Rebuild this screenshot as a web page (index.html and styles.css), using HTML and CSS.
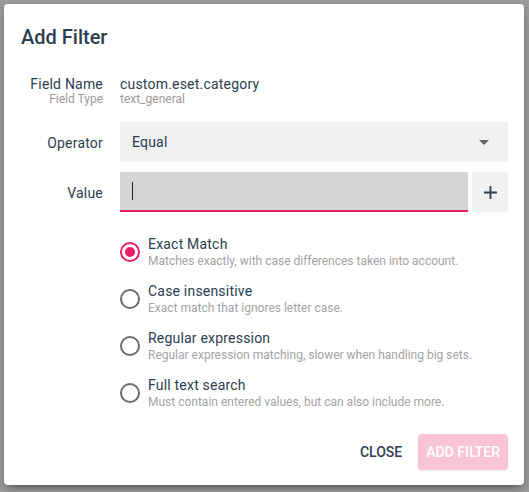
FILE: index.html
```html
<!DOCTYPE html>
<html lang="en">
<head>
<meta charset="utf-8">
<title>Add Filter</title>
<link rel="stylesheet" href="styles.css">
</head>
<body>
<div class="dialog">
  <h2 class="title">Add Filter</h2>

  <div class="row field-row">
    <div class="label">
      <div class="lbl-main">Field Name</div>
      <div class="lbl-sub">Field Type</div>
    </div>
    <div class="content">
      <div class="field-name">custom.eset.category</div>
      <div class="field-type">text_general</div>
    </div>
  </div>

  <div class="row control-row operator-row">
    <div class="label">Operator</div>
    <div class="select">
      <span class="select-text">Equal</span>
      <svg class="arrow" width="10" height="5" viewBox="0 0 10 5"><path d="M0 0 L10 0 L5 5 Z" fill="#666"/></svg>
    </div>
  </div>

  <div class="row control-row value-row">
    <div class="label">Value</div>
    <div class="input-group">
      <div class="input"><span class="caret"></span></div>
      <button class="add-btn" type="button" aria-label="Add value">
        <svg width="13" height="13" viewBox="0 0 13 13"><path d="M6.5 0 V13 M0 6.5 H13" stroke="#2c3e50" stroke-width="1.8" fill="none"/></svg>
      </button>
    </div>
  </div>

  <div class="row radio-row">
    <div></div>
    <div class="radios">
      <div class="radio-item">
        <span class="radio checked"></span>
        <div class="radio-text">
          <div class="radio-title">Exact Match</div>
          <div class="radio-desc">Matches exactly, with case differences taken into account.</div>
        </div>
      </div>
      <div class="radio-item">
        <span class="radio"></span>
        <div class="radio-text">
          <div class="radio-title">Case insensitive</div>
          <div class="radio-desc">Exact match that ignores letter case.</div>
        </div>
      </div>
      <div class="radio-item">
        <span class="radio"></span>
        <div class="radio-text">
          <div class="radio-title">Regular expression</div>
          <div class="radio-desc">Regular expression matching, slower when handling big sets.</div>
        </div>
      </div>
      <div class="radio-item">
        <span class="radio"></span>
        <div class="radio-text">
          <div class="radio-title">Full text search</div>
          <div class="radio-desc">Must contain entered values, but can also include more.</div>
        </div>
      </div>
    </div>
  </div>

  <div class="actions">
    <button class="btn btn-text" type="button">Close</button>
    <button class="btn btn-primary" type="button" disabled>Add Filter</button>
  </div>
</div>
</body>
</html>
```

FILE: styles.css
```css
html, body {
  margin: 0;
  padding: 0;
}

body {
  background: #9b9b9b;
  font-family: Roboto, "Liberation Sans", sans-serif;
  color: #2c3e50;
  width: 529px;
  height: 492px;
  overflow: hidden;
}

.dialog {
  box-sizing: border-box;
  margin: 4px 0 0 4px;
  width: 520px;
  height: 481px;
  background: #fff;
  border-radius: 4px;
  padding: 21px 16px 15px 17px;
  box-shadow: 0 6px 10px -4px rgba(0, 0, 0, 0.35), 0 2px 6px rgba(0, 0, 0, 0.2);
  display: flex;
  flex-direction: column;
}

.title {
  margin: 0;
  font-size: 20px;
  line-height: 24px;
  font-weight: 500;
  color: #2c3e50;
}

.row {
  display: grid;
  grid-template-columns: 82px 1fr;
  column-gap: 17px;
}

.label {
  text-align: right;
  font-size: 14px;
  letter-spacing: 0.2px;
  color: #2c3e50;
}

.field-row {
  margin-top: 27px;
}

.lbl-main,
.field-name {
  font-size: 14px;
  line-height: 16px;
  letter-spacing: 0.2px;
  color: #2c3e50;
}

.lbl-sub,
.field-type {
  font-size: 12px;
  line-height: 14px;
  letter-spacing: 0;
  color: #9a9a9a;
}

.control-row {
  align-items: center;
}

.control-row .label {
  padding-top: 2px;
}

.operator-row {
  margin-top: 16px;
}

.value-row {
  margin-top: 10px;
}

.select {
  height: 40px;
  background: #f1f1f1;
  display: flex;
  align-items: center;
  justify-content: space-between;
  padding: 0 19px 0 12px;
  font-size: 14px;
  letter-spacing: 0.2px;
  color: #2c3e50;
}

.arrow {
  display: block;
  margin-top: 1px;
}

.input-group {
  display: flex;
  gap: 4px;
  height: 40px;
}

.input {
  flex: 1;
  box-sizing: border-box;
  background: #d5d5d5;
  border-bottom: 2px solid #e91e63;
  display: flex;
  align-items: center;
  padding-left: 12px;
}

.caret {
  display: block;
  width: 1px;
  height: 18px;
  background: #222;
}

.add-btn {
  width: 36px;
  height: 40px;
  border: none;
  padding: 0;
  background: #f1f1f1;
  display: flex;
  align-items: center;
  justify-content: center;
}

.add-btn svg {
  display: block;
}

.radio-row {
  margin-top: 23px;
}

.radios {
  display: flex;
  flex-direction: column;
  gap: 14px;
}

.radio-item {
  display: flex;
  align-items: center;
  gap: 8px;
  height: 33px;
}

.radio {
  box-sizing: border-box;
  width: 20px;
  height: 20px;
  border-radius: 50%;
  border: 2px solid #6b6b6b;
  flex: none;
  position: relative;
}

.radio.checked {
  border-color: #e91e63;
}

.radio.checked::after {
  content: "";
  position: absolute;
  left: 3px;
  top: 3px;
  width: 10px;
  height: 10px;
  border-radius: 50%;
  background: #e91e63;
}

.radio-title {
  font-size: 14px;
  line-height: 19px;
  letter-spacing: 0.2px;
  color: #2c3e50;
}

.radio-desc {
  font-size: 12px;
  line-height: 14px;
  color: #a3a3a3;
}

.actions {
  margin-top: auto;
  display: flex;
  justify-content: flex-end;
  gap: 8px;
}

.btn {
  height: 36px;
  border: none;
  border-radius: 4px;
  padding: 0 8px;
  font-family: Roboto, "Liberation Sans", sans-serif;
  font-size: 14px;
  font-weight: 500;
  text-transform: uppercase;
  background: transparent;
}

.btn-text {
  color: #2c3e50;
}

.btn-primary {
  background: #f8c4d6;
  color: #fff;
  box-shadow: 0 1px 2px rgba(0, 0, 0, 0.08);
}
```
